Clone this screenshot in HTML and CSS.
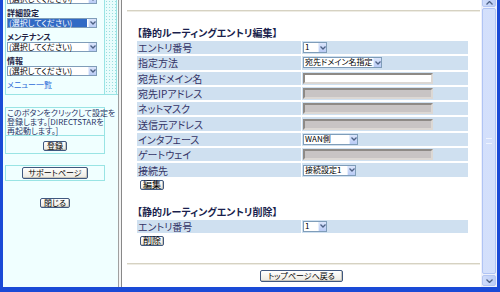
FILE: index.html
```html
<!DOCTYPE html>
<html lang="ja">
<head>
  <meta charset="UTF-8" />
  <title>静的ルーティング設定</title>
  <link rel="stylesheet" href="styles.css">
</head>
<body>
<div class="window">
  <aside class="menu-frame">
    <div class="menu-box">
      <div class="menu-main">
        <span class="combo"><span class="combo-val">(選択してください)</span><span class="combo-btn"><svg width="6" height="4" viewBox="0 0 6 4"><path d="M0.5 0.5 L3 3 L5.5 0.5" fill="none" stroke="#4d6185" stroke-width="1.3"/></svg></span></span>
        <div class="menu-label">詳細設定</div>
        <span class="combo combo-focus"><span class="combo-val">(選択してください)</span><span class="combo-btn"><svg width="6" height="4" viewBox="0 0 6 4"><path d="M0.5 0.5 L3 3 L5.5 0.5" fill="none" stroke="#4d6185" stroke-width="1.3"/></svg></span></span>
        <div class="menu-label">メンテナンス</div>
        <span class="combo"><span class="combo-val">(選択してください)</span><span class="combo-btn"><svg width="6" height="4" viewBox="0 0 6 4"><path d="M0.5 0.5 L3 3 L5.5 0.5" fill="none" stroke="#4d6185" stroke-width="1.3"/></svg></span></span>
        <div class="menu-label">情報</div>
        <span class="combo"><span class="combo-val">(選択してください)</span><span class="combo-btn"><svg width="6" height="4" viewBox="0 0 6 4"><path d="M0.5 0.5 L3 3 L5.5 0.5" fill="none" stroke="#4d6185" stroke-width="1.3"/></svg></span></span>
        <a class="menu-link" href="#">メニュー一覧</a>
      </div>
      <div class="menu-dots"></div>
    </div>

    <div class="info-box">
      <p class="info-text">このボタンをクリックして設定を<br>登録します。[DIRECTSTARを<br>再起動します。]</p>
      <div class="info-foot"><button class="xp-btn">登録</button></div>
    </div>

    <div class="support-box">
      <button class="xp-btn wide">サポートページ</button>
    </div>

    <div class="close-row"><button class="xp-btn">閉じる</button></div>
  </aside>

  <div class="splitter"></div>

  <main class="main-frame">
    <div class="content">
      <div class="rule"></div>
      <div class="section">
        <div class="sec-title">【静的ルーティングエントリ編集】</div>
        <table class="form">
          <tr><th>エントリ番号</th><td><span class="combo c-num"><span class="combo-val">1</span><span class="combo-btn"><svg width="6" height="4" viewBox="0 0 6 4"><path d="M0.5 0.5 L3 3 L5.5 0.5" fill="none" stroke="#4d6185" stroke-width="1.3"/></svg></span></span></td></tr>
          <tr><th>指定方法</th><td><span class="combo c-method"><span class="combo-val">宛先ドメイン名指定</span><span class="combo-btn"><svg width="6" height="4" viewBox="0 0 6 4"><path d="M0.5 0.5 L3 3 L5.5 0.5" fill="none" stroke="#4d6185" stroke-width="1.3"/></svg></span></span></td></tr>
          <tr><th>宛先ドメイン名</th><td><input class="field" type="text"></td></tr>
          <tr><th>宛先IPアドレス</th><td><input class="field" type="text" disabled></td></tr>
          <tr><th>ネットマスク</th><td><input class="field" type="text" disabled></td></tr>
          <tr><th>送信元アドレス</th><td><input class="field" type="text" disabled></td></tr>
          <tr><th>インタフェース</th><td><span class="combo c-if"><span class="combo-val">WAN側</span><span class="combo-btn"><svg width="6" height="4" viewBox="0 0 6 4"><path d="M0.5 0.5 L3 3 L5.5 0.5" fill="none" stroke="#4d6185" stroke-width="1.3"/></svg></span></span></td></tr>
          <tr><th>ゲートウェイ</th><td><input class="field" type="text" disabled></td></tr>
          <tr><th>接続先</th><td><span class="combo c-conn"><span class="combo-val">接続設定1</span><span class="combo-btn"><svg width="6" height="4" viewBox="0 0 6 4"><path d="M0.5 0.5 L3 3 L5.5 0.5" fill="none" stroke="#4d6185" stroke-width="1.3"/></svg></span></span></td></tr>
        </table>
        <button class="xp-btn sec-btn">編集</button>
      </div>

      <div class="section del">
        <div class="sec-title">【静的ルーティングエントリ削除】</div>
        <table class="form">
          <tr><th>エントリ番号</th><td><span class="combo c-num"><span class="combo-val">1</span><span class="combo-btn"><svg width="6" height="4" viewBox="0 0 6 4"><path d="M0.5 0.5 L3 3 L5.5 0.5" fill="none" stroke="#4d6185" stroke-width="1.3"/></svg></span></span></td></tr>
        </table>
        <button class="xp-btn sec-btn">削除</button>
      </div>

      <div class="rule bottom"></div>
      <button class="xp-btn back">トップページへ戻る</button>
    </div>

    <div class="scrollbar">
      <div class="sb-btn up"><svg width="7" height="4" viewBox="0 0 7 4"><path d="M0.5 3.5 L3.5 0.5 L6.5 3.5" fill="none" stroke="#4d6185" stroke-width="1.3"/></svg></div>
      <div class="sb-thumb"><span class="grip"></span></div>
      <div class="sb-btn down"><svg width="7" height="4" viewBox="0 0 7 4"><path d="M0.5 0.5 L3.5 3.5 L6.5 0.5" fill="none" stroke="#4d6185" stroke-width="1.3"/></svg></div>
    </div>
  </main>
</div>
</body>
</html>
```

FILE: styles.css
```css
* {
  box-sizing: border-box;
}
body {
  margin: 0;
  font-family: "Noto Sans CJK JP", "Liberation Sans", sans-serif;
  font-feature-settings: "palt";
  color: #333355;
}
.window {
  display: flex;
  width: 500px;
  height: 292px;
  overflow: hidden;
  border-left: 3px solid #1a4ad6;
  border-right: 3px solid #1a4ad6;
  border-bottom: 5px solid #1a4ad6;
}

/* left menu frame */
.menu-frame {
  width: 115px;
  flex: none;
  background: #f0ffff;
  padding-left: 2px;
  overflow: hidden;
}
.menu-box {
  display: flex;
  margin-top: -6px;
  border-bottom: 1px solid #99e4e4;
}
.menu-main {
  width: 100px;
  border-left: 1px solid #99e4e4;
  border-right: 1px solid #99e4e4;
  padding: 0 0 4px 1px;
  display: flex;
  flex-direction: column;
  align-items: flex-start;
}
.menu-dots {
  flex: 1;
  margin-right: 1px;
  border-right: 1px solid #99e4e4;
  background-color: #e8fcfc;
  background-image: radial-gradient(#9adede 0.6px, transparent 0.8px);
  background-size: 3px 3px;
}
.menu-label {
  font-size: 8px;
  line-height: 10px;
  margin-top: 4px;
  font-weight: bold;
  color: #224;
}
.menu-link {
  font-size: 8px;
  line-height: 10px;
  margin-top: 4px;
  color: #2d6bd8;
  text-decoration: none;
}

/* combo boxes */
.combo {
  display: inline-flex;
  align-items: stretch;
  height: 10px;
  width: 90px;
  border: 1px solid #7f9db9;
  background: #fff;
  font-size: 8px;
  line-height: 8px;
  color: #000;
  vertical-align: middle;
}
.combo-val {
  flex: 1;
  padding-left: 1px;
  white-space: nowrap;
  overflow-x: clip;
  overflow-y: visible;
}
.combo-focus .combo-val {
  background: #316ac5;
  color: #fff;
  margin: 0 1px 0 0;
}
.combo-btn {
  width: 8px;
  flex: none;
  background: linear-gradient(#dbe5fb, #b9cbf5);
  border-left: 1px solid #e6eefc;
  display: flex;
  align-items: center;
  justify-content: center;
}

/* left info boxes */
.info-box {
  width: 100px;
  margin-top: 12px;
  border: 1px solid #99e4e4;
}
.info-text {
  margin: 0;
  padding: 0 0 0 1px;
  font-size: 8px;
  line-height: 9px;
  white-space: nowrap;
  color: #2a3566;
}
.info-foot {
  border-top: 1px solid #99e4e4;
  padding: 5px 0 2px;
}
.support-box {
  width: 100px;
  margin-top: 11px;
  border: 1px solid #99e4e4;
  padding: 1px 0;
}
.close-row {
  width: 100px;
  margin-top: 17px;
}

/* buttons */
.xp-btn {
  display: block;
  margin: 0 auto;
  font-family: inherit;
  font-feature-settings: "palt";
  font-size: 8px;
  line-height: 8px;
  height: 10px;
  padding: 0 3px;
  color: #000;
  border: 1px solid #40587f;
  border-radius: 2px;
  background: linear-gradient(#ffffff, #ece9e0);
  box-shadow: inset -1px -1px 0 #c9c6bb;
}
.xp-btn.wide {
  width: 66px;
  height: 12px;
}

.splitter {
  width: 4px;
  flex: none;
  background: #f4f4f4;
  border-left: 1px solid #a0a0a0;
  border-right: 1px solid #888;
}

/* main frame */
.main-frame {
  flex: 1;
  display: flex;
  background: #fff;
}
.content {
  flex: 1;
}
.rule {
  height: 2px;
  margin: 10px 1px 0 5px;
  border-top: 1px solid #d6d2c2;
  border-bottom: 1px solid #eeece4;
}
.section {
  padding-left: 15px;
  margin-top: 14px;
}
.section.del {
  margin-top: 15px;
}
.sec-title {
  font-size: 10px;
  line-height: 13px;
  font-weight: bold;
  color: #1a1f4d;
  white-space: nowrap;
}
.form {
  border-spacing: 1px 2px;
  width: 333px;
  margin-left: -1px;
}
.form th,
.form td {
  background: #cfe0f0;
  height: 13.3px;
  padding: 0;
  font-weight: normal;
  text-align: left;
  white-space: nowrap;
}
.form th {
  width: 164px;
  font-size: 10px;
  line-height: 11px;
  color: #333366;
  padding-left: 1px;
}
.form td {
  padding-left: 1px;
  line-height: 0;
}
.form .combo {
  height: 11px;
}
.c-num { width: 24px; }
.c-method { width: 79px; }
.c-if { width: 55px; }
.c-conn { width: 53px; }
.field {
  width: 130px;
  height: 11px;
  padding: 0;
  border: 2px solid;
  border-color: #8e8a86 #dcd8d4 #dcd8d4 #8e8a86;
  background: #fff;
  vertical-align: middle;
}
.field:disabled {
  background: #c8c4c4;
}
.xp-btn.sec-btn {
  margin: 1px 0 0 3px;
  font-size: 9px;
  padding: 0 2px;
}
.rule.bottom {
  margin-top: 17px;
}
.xp-btn.back {
  margin-top: 5px;
  width: 83px;
  height: 12px;
}

/* scrollbar */
.scrollbar {
  width: 16px;
  flex: none;
  display: flex;
  flex-direction: column;
  background: #eef1fb;
  padding: 0 1px;
}
.sb-btn {
  height: 11px;
  flex: none;
  background: linear-gradient(90deg, #cfdcfb, #bccdf6);
  border: 1px solid #b4c6f2;
  border-radius: 2px;
  display: flex;
  align-items: center;
  justify-content: center;
}
.sb-btn.up {
  height: 9px;
  margin-top: -2px;
}
.sb-btn.down {
  margin-bottom: 1px;
}
.sb-thumb {
  flex: 1;
  margin: 1px 0;
  background-color: #c9d7fa;
  background-image: radial-gradient(#dfe8fd 0.6px, transparent 0.8px);
  background-size: 2px 2px;
  border: 1px solid #b0c4f4;
  border-radius: 2px;
  display: flex;
  align-items: center;
  justify-content: center;
}
.grip {
  width: 6px;
  height: 6px;
  border-top: 1px solid #eef3fe;
  border-bottom: 1px solid #eef3fe;
}
```
